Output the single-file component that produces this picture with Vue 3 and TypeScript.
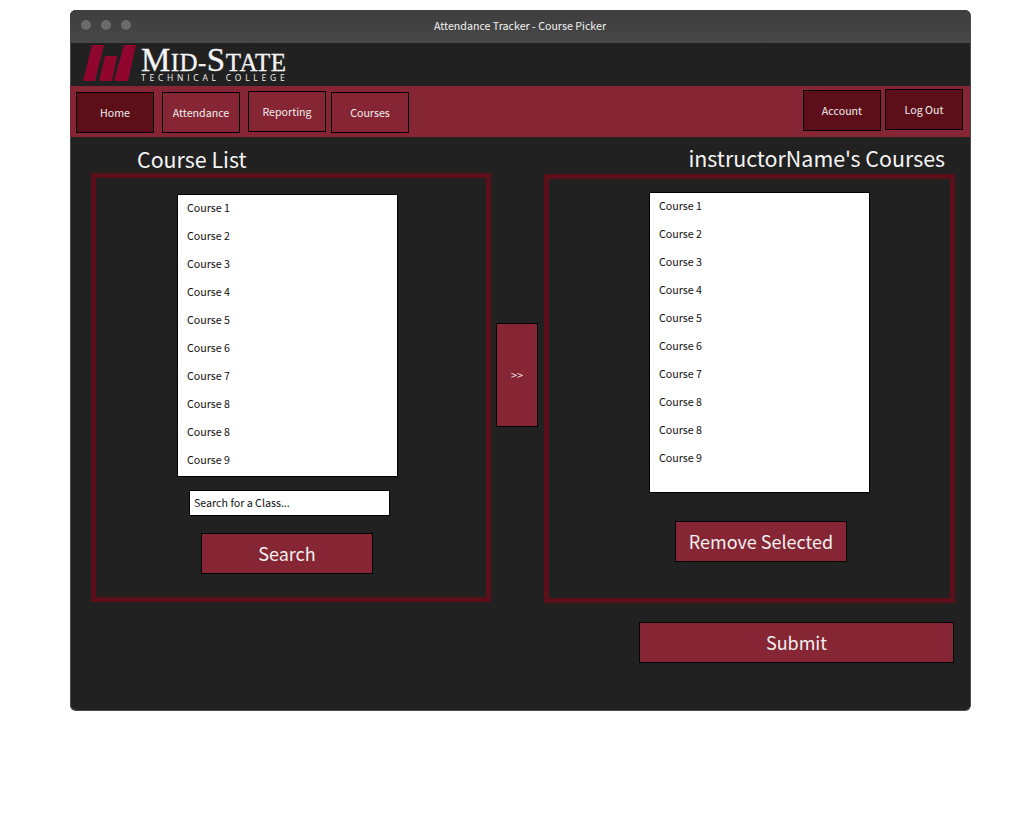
<script setup lang="ts">
interface NavItem {
  label: string
  cls: string
  active?: boolean
}

const leftNav: NavItem[] = [
  { label: 'Home', cls: 'nav-home', active: true },
  { label: 'Attendance', cls: 'nav-attendance' },
  { label: 'Reporting', cls: 'nav-reporting' },
  { label: 'Courses', cls: 'nav-courses' },
]

const rightNav: NavItem[] = [
  { label: 'Account', cls: 'nav-account', active: true },
  { label: 'Log Out', cls: 'nav-logout', active: true },
]

const courses = [
  'Course 1',
  'Course 2',
  'Course 3',
  'Course 4',
  'Course 5',
  'Course 6',
  'Course 7',
  'Course 8',
  'Course 8',
  'Course 9',
]
</script>

<template>
  <div class="page">
    <div class="window">
      <header class="titlebar">
        <div class="dots">
          <span class="dot"></span>
          <span class="dot"></span>
          <span class="dot"></span>
        </div>
        <span class="title">Attendance Tracker - Course Picker</span>
      </header>

      <div class="brand">
        <svg class="mark" width="53" height="36" viewBox="0 0 53 36">
          <path d="M9 0H21L12 36H0Z" fill="#90062f" />
          <path d="M22 11H34L29 36H16Z" fill="#90062f" />
          <path d="M41 0H53L45 36H31Z" fill="#90062f" />
        </svg>
        <div class="wordmark">
          <div class="wm-top"><span class="wm-big">M</span>ID-<span class="wm-big">S</span>TATE</div>
          <div class="wm-sub">TECHNICAL COLLEGE</div>
        </div>
      </div>

      <nav class="nav">
        <div class="nav-group">
          <button
            v-for="item in leftNav"
            :key="item.label"
            type="button"
            class="nav-btn"
            :class="[item.cls, { active: item.active }]"
          >
            {{ item.label }}
          </button>
        </div>
        <div class="nav-group">
          <button
            v-for="item in rightNav"
            :key="item.label"
            type="button"
            class="nav-btn"
            :class="[item.cls, { active: item.active }]"
          >
            {{ item.label }}
          </button>
        </div>
      </nav>

      <main class="content">
        <section class="col col-left">
          <h2 class="heading heading-left">Course List</h2>
          <div class="panel panel-left">
            <ul class="list list-left">
              <li v-for="(c, i) in courses" :key="i">{{ c }}</li>
            </ul>
            <input class="search" type="text" value="Search for a Class..." />
            <button type="button" class="btn btn-search">Search</button>
          </div>
        </section>

        <button type="button" class="move">&gt;&gt;</button>

        <section class="col col-right">
          <h2 class="heading heading-right">instructorName's Courses</h2>
          <div class="panel panel-right">
            <ul class="list list-right">
              <li v-for="(c, i) in courses" :key="i">{{ c }}</li>
            </ul>
            <button type="button" class="btn btn-remove">Remove Selected</button>
          </div>
          <button type="button" class="btn btn-submit">Submit</button>
        </section>
      </main>
    </div>
  </div>
</template>

<style>
html,
body {
  background: #fff;
}
</style>

<style scoped>
.page {
  height: 821px;
  padding: 10px 49px 0 70px;
  box-sizing: border-box;
  font-family: "Noto Sans CJK SC", "Noto Sans", sans-serif;
}

.window {
  height: 701px;
  background: #212121;
  border-radius: 6px;
  border-right: 1px solid #4a4a4a;
  border-bottom: 1px solid #4a4a4a;
  box-shadow: inset 1px 0 #4a4a4a;
  overflow: hidden;
  box-sizing: border-box;
}

.titlebar {
  height: 33px;
  background: linear-gradient(#3e3e3e, #474747);
  position: relative;
  display: flex;
  align-items: center;
  justify-content: center;
}

.dots {
  position: absolute;
  left: 11px;
  top: 10px;
  display: flex;
  gap: 10px;
}

.dot {
  width: 10px;
  height: 10px;
  border-radius: 50%;
  background: #6b6b6b;
}

.title {
  color: #f2f2f2;
  font-size: 10.67px;
  line-height: 14px;
  margin-top: -1px;
}

.brand {
  height: 43px;
  display: flex;
  align-items: flex-start;
  padding: 2px 0 0 13px;
  box-sizing: border-box;
  gap: 5px;
}

.mark {
  display: block;
}

.wordmark {
  color: #f4f4f4;
  padding-top: 1px;
}

.wm-top {
  font-family: "Liberation Serif", serif;
  font-size: 25px;
  line-height: 28px;
  height: 27px;
  letter-spacing: 0.45px;
  white-space: nowrap;
  -webkit-text-stroke: 0.3px #f4f4f4;
}

.wm-big {
  font-size: 33px;
}

.wm-sub {
  font-family: "Open Sans", sans-serif;
  font-size: 8.5px;
  line-height: 9px;
  letter-spacing: 3.75px;
  white-space: nowrap;
}

.nav {
  height: 51px;
  background: #862533;
  display: flex;
  justify-content: space-between;
  padding: 0 7px 0 6px;
}

.nav-group {
  display: flex;
  align-items: flex-start;
}

.nav-btn {
  width: 78px;
  height: 41px;
  background: #862533;
  color: #eee;
  border: 1px solid #000;
  font-family: inherit;
  font-size: 10.67px;
  line-height: 14px;
  padding: 0;
}

.nav-btn.active {
  background: #5c0f18;
}

.nav-home {
  margin-top: 6px;
}

.nav-attendance {
  margin: 6px 0 0 8px;
}

.nav-reporting {
  margin: 5px 0 0 8px;
}

.nav-courses {
  margin: 6px 0 0 5px;
}

.nav-account {
  margin-top: 4px;
}

.nav-logout {
  margin: 3px 0 0 4px;
}

.content {
  display: flex;
  align-items: flex-start;
  padding-left: 21px;
}

.col {
  display: flex;
  flex-direction: column;
}

.heading {
  color: #f5f5f5;
  font-size: 21.4px;
  font-weight: 400;
  line-height: 30px;
  margin: 0;
}

.heading-left {
  margin: 7px 0 0 46px;
  height: 29px;
}

.heading-right {
  margin: 6px 10px 0 0;
  height: 31px;
  text-align: right;
}

.panel {
  border: 5px solid #5c0f18;
  box-sizing: border-box;
}

.panel-left {
  width: 400px;
  height: 429px;
  display: flex;
  flex-direction: column;
  padding: 16px 0 0 81px;
}

.panel-right {
  width: 411px;
  height: 429px;
  display: flex;
  flex-direction: column;
  padding: 13px 0 0 100px;
}

.list {
  list-style: none;
  margin: 0;
  padding: 0;
  width: 221px;
  background: #fff;
  border: 1px solid #000;
  box-sizing: border-box;
  color: #111;
  font-size: 10.67px;
}

.list li {
  height: 28px;
  line-height: 26px;
  padding-left: 9px;
}

.list-left {
  height: 283px;
}

.list-right {
  height: 301px;
}

.search {
  width: 201px;
  height: 26px;
  margin: 13px 0 0 12px;
  padding: 0 4px 2px;
  box-sizing: border-box;
  border: 1px solid #000;
  border-radius: 0;
  background: #fff;
  color: #111;
  font-family: inherit;
  font-size: 10.67px;
  outline: none;
}

.btn {
  background: #862533;
  color: #f0f0f0;
  border: 1px solid #000;
  font-family: inherit;
  font-size: 18px;
  line-height: 24px;
  padding: 0 0 2px;
}

.btn-search {
  width: 172px;
  height: 41px;
  margin: 17px 0 0 24px;
}

.btn-remove {
  width: 172px;
  height: 41px;
  margin: 28px 0 0 26px;
}

.btn-submit {
  width: 315px;
  height: 41px;
  margin: 19px 0 0 95px;
}

.move {
  width: 42px;
  height: 104px;
  margin: 186px 6px 0 5px;
  background: #862533;
  color: #eee;
  border: 1px solid #000;
  font-family: inherit;
  font-size: 10.67px;
  line-height: 14px;
  padding: 0;
}
</style>
